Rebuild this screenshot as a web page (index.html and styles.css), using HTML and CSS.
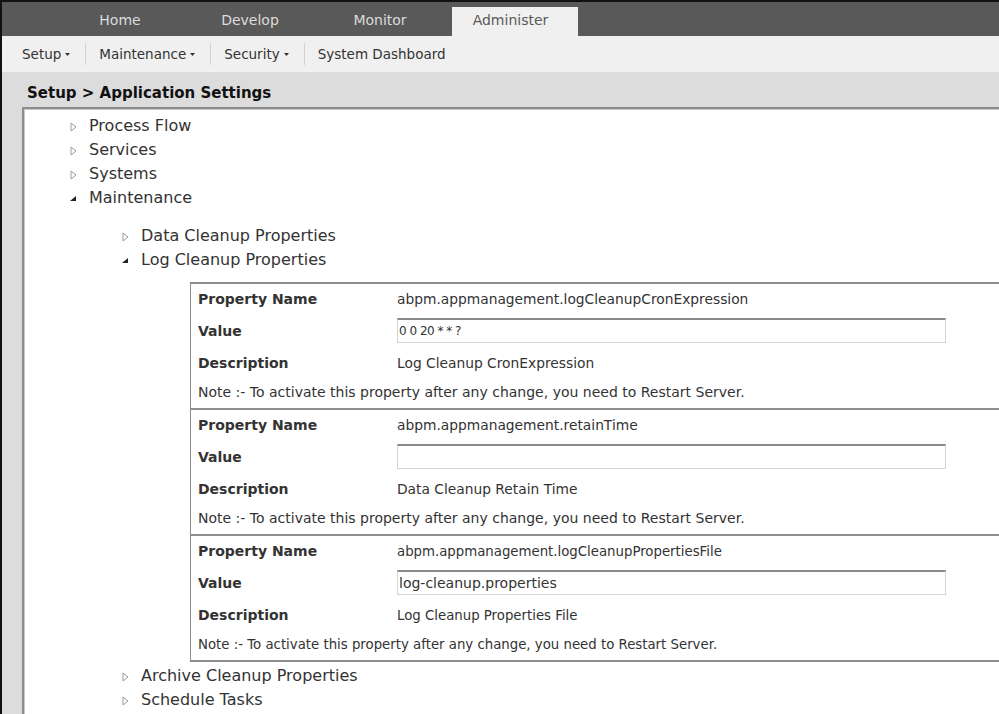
FILE: index.html
```html
<!DOCTYPE html>
<html lang="en">
<head>
<meta charset="utf-8">
<title>Application Settings</title>
<link rel="stylesheet" href="styles.css">
</head>
<body>
<div class="app">
  <nav class="tabs">
    <a class="tab">Home</a>
    <a class="tab">Develop</a>
    <a class="tab">Monitor</a>
    <a class="tab active">Administer</a>
  </nav>

  <div class="subnav">
    <span class="menu">Setup <svg class="caret" viewBox="0 0 5 3" width="5" height="3"><polygon points="0,0 5,0 2.5,3"/></svg></span>
    <span class="sep"></span>
    <span class="menu">Maintenance <svg class="caret" viewBox="0 0 5 3" width="5" height="3"><polygon points="0,0 5,0 2.5,3"/></svg></span>
    <span class="sep"></span>
    <span class="menu">Security <svg class="caret" viewBox="0 0 5 3" width="5" height="3"><polygon points="0,0 5,0 2.5,3"/></svg></span>
    <span class="sep"></span>
    <span class="menu">System Dashboard</span>
  </div>

  <div class="main">
    <h1 class="crumb">Setup &gt; Application Settings</h1>
    <div class="panel">
      <ul class="tree">
        <li><span class="twisty"><svg viewBox="0 0 7 10" width="7" height="10"><polygon class="closed" points="1,1 6,5 1,9"/></svg></span>Process Flow</li>
        <li><span class="twisty"><svg viewBox="0 0 7 10" width="7" height="10"><polygon class="closed" points="1,1 6,5 1,9"/></svg></span>Services</li>
        <li><span class="twisty"><svg viewBox="0 0 7 10" width="7" height="10"><polygon class="closed" points="1,1 6,5 1,9"/></svg></span>Systems</li>
        <li><span class="twisty"><svg viewBox="0 0 7 10" width="7" height="10"><polygon class="open" points="6,2 6,7 0,7"/></svg></span>Maintenance
          <ul class="tree sub">
            <li><span class="twisty"><svg viewBox="0 0 7 10" width="7" height="10"><polygon class="closed" points="1,1 6,5 1,9"/></svg></span>Data Cleanup Properties</li>
            <li><span class="twisty"><svg viewBox="0 0 7 10" width="7" height="10"><polygon class="open" points="6,2 6,7 0,7"/></svg></span>Log Cleanup Properties
              <div class="props">
                <div class="prop">
                  <div class="label">Property Name</div>
                  <div class="val">abpm.appmanagement.logCleanupCronExpression</div>
                  <div class="label">Value</div>
                  <div class="val"><input class="field small" type="text" value="0 0 20 * * ?"></div>
                  <div class="label">Description</div>
                  <div class="val">Log Cleanup CronExpression</div>
                  <div class="note">Note :- To activate this property after any change, you need to Restart Server.</div>
                </div>
                <div class="prop">
                  <div class="label">Property Name</div>
                  <div class="val">abpm.appmanagement.retainTime</div>
                  <div class="label">Value</div>
                  <div class="val"><input class="field" type="text" value=""></div>
                  <div class="label">Description</div>
                  <div class="val">Data Cleanup Retain Time</div>
                  <div class="note">Note :- To activate this property after any change, you need to Restart Server.</div>
                </div>
                <div class="prop narrow">
                  <div class="label">Property Name</div>
                  <div class="val">abpm.appmanagement.logCleanupPropertiesFile</div>
                  <div class="label">Value</div>
                  <div class="val"><input class="field" type="text" value="log-cleanup.properties"></div>
                  <div class="label">Description</div>
                  <div class="val">Log Cleanup Properties File</div>
                  <div class="note">Note :- To activate this property after any change, you need to Restart Server.</div>
                </div>
              </div>
            </li>
            <li><span class="twisty"><svg viewBox="0 0 7 10" width="7" height="10"><polygon class="closed" points="1,1 6,5 1,9"/></svg></span>Archive Cleanup Properties</li>
            <li><span class="twisty"><svg viewBox="0 0 7 10" width="7" height="10"><polygon class="closed" points="1,1 6,5 1,9"/></svg></span>Schedule Tasks</li>
          </ul>
        </li>
      </ul>
    </div>
  </div>
</div>
</body>
</html>
```

FILE: styles.css
```css
html, body {
  margin: 0;
  padding: 0;
  height: 100%;
  overflow: hidden;
  background: #ffffff;
}

body {
  font-family: "DejaVu Sans", Verdana, sans-serif;
  color: #333333;
}

.app {
  height: 100%;
  border-top: 2px solid #111111;
  border-left: 2px solid #111111;
  box-sizing: border-box;
  display: flex;
  flex-direction: column;
}

/* top navigation tabs */
.tabs {
  height: 34px;
  background: #595959;
  display: flex;
  align-items: flex-end;
  padding-left: 55px;
  gap: 4px;
  flex: none;
}

.tab {
  width: 126px;
  height: 29px;
  line-height: 27px;
  text-align: center;
  font-size: 14px;
  color: #dcdcdc;
  box-sizing: border-box;
}

.tab.active {
  margin-left: 5px;
  padding-right: 9px;
  background: #f0f0f0;
  color: #5a5a5a;
}

/* secondary menu bar */
.subnav {
  height: 36px;
  background: #f0f0f0;
  display: flex;
  align-items: center;
  font-size: 13.5px;
  color: #333333;
  padding-left: 20px;
  flex: none;
}

.menu {
  display: flex;
  align-items: center;
  gap: 4px;
  padding: 0 15px 0 13px;
}

.menu:first-child {
  padding-left: 0;
}

.caret {
  fill: #333333;
  margin-top: 1px;
}

.sep {
  width: 1px;
  height: 22px;
  background: #d2d2d2;
}

/* content area */
.main {
  flex: 1;
  background: #dcdcdc;
  padding-left: 20px;
  display: flex;
  flex-direction: column;
  min-height: 0;
}

.crumb {
  margin: 0;
  height: 35px;
  line-height: 42px;
  padding-left: 5px;
  font-size: 15px;
  font-weight: bold;
  color: #111111;
  flex: none;
}

.panel {
  flex: 1;
  background: #ffffff;
  border-top: 2px solid #8d8d8d;
  border-left: 2px solid #8d8d8d;
  box-shadow: inset 1px 1px 0 #c8c8c8;
  padding-top: 5px;
}

/* tree */
.tree {
  list-style: none;
  margin: 0;
  padding: 0 0 0 46px;
  font-size: 16px;
  line-height: 24px;
  color: #333333;
}

.tree.sub {
  padding-left: 52px;
  margin-top: 14px;
}

.twisty {
  display: inline-block;
  width: 19px;
  vertical-align: -1px;
}

.twisty svg {
  display: block;
}

.closed {
  fill: #ffffff;
  stroke: #9a9a9a;
  stroke-width: 1;
}

.open {
  fill: #222222;
}

/* property blocks */
.props {
  margin: 10px 0 2px 68px;
  border-left: 1px solid #8d8d8d;
  border-bottom: 2px solid #8d8d8d;
  line-height: normal;
}

.prop {
  display: grid;
  grid-template-columns: 206px 1fr;
  grid-template-rows: 30px 33px 32px 29px;
  border-top: 2px solid #8d8d8d;
  align-items: center;
}

.label {
  padding-left: 7px;
  font-size: 14px;
  font-weight: bold;
  color: #333333;
}

.val {
  font-size: 13.8px;
  color: #333333;
}

.field {
  display: block;
  box-sizing: border-box;
  width: 549px;
  height: 25px;
  margin: 0;
  padding: 0 1px;
  border: 1px solid #d4d4d4;
  border-top: 2px solid #8a8a8a;
  font-family: "DejaVu Sans", Verdana, sans-serif;
  font-size: 13.5px;
  color: #333333;
  background: #ffffff;
  outline: none;
}

.field.small {
  font-size: 12px;
  letter-spacing: -0.5px;
}

.note {
  grid-column: 1 / -1;
  padding: 0 0 3px 7px;
  font-size: 14px;
  color: #333333;
}

.prop.narrow .val,
.prop.narrow .note {
  font-size: 13.3px;
}

.prop.narrow .field {
  font-size: 14px;
}
```
